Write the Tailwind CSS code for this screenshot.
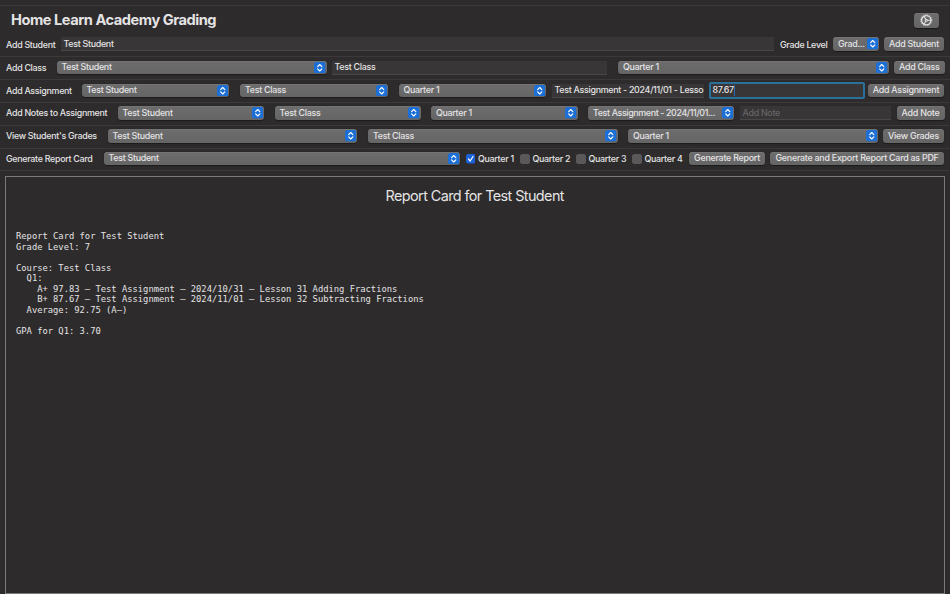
<!DOCTYPE html>
<html lang="en">
<head>
    <meta charset="UTF-8" />
    <meta name="viewport" content="width=device-width, initial-scale=1.0" />
    <title>Home Learn Academy Grading</title>
    <script src="https://cdn.jsdelivr.net/npm/@tailwindcss/browser@4"></script>
    <style>
      body {
        font-family: Inter, 'Liberation Sans', sans-serif;
      }
      .popup, .btn {
        background: linear-gradient(to bottom, #6e6d6e, #666566);
        border-radius: 3.5px;
        height: 13.5px;
        box-shadow: inset 0 0.5px 0 #7d7c7d, 0 0.5px 1px #1c1b1c;
        flex-shrink: 0;
        display: flex;
        align-items: center;
      }
      .popup {
        justify-content: space-between;
        padding: 0 1px 0 5px;
      }
      .btn {
        justify-content: center;
        letter-spacing: -0.25px;
      }
      .popup svg {
        width: 11.5px;
        height: 11.5px;
        flex-shrink: 0;
      }
      .field {
        background: #383637;
        border-bottom: 1px solid #4a4748;
        height: 14px;
        padding-left: 2.5px;
        flex-shrink: 0;
        display: flex;
        align-items: center;
        overflow: hidden;
      }
    </style>
</head>
<body class="w-[950px] h-[594px] overflow-hidden bg-[#2d2b2c] text-[#e4e3e4] text-[8.9px] font-medium tracking-[-0.29px] leading-none whitespace-nowrap">
    <!-- Shared icons -->
    <svg class="hidden">
        <symbol id="arrows" viewBox="0 0 22 22">
            <rect width="22" height="22" rx="5" fill="#1b6fd6" />
            <path d="M7 8.8L11 4.8L15 8.8M7 13.2L11 17.2L15 13.2" fill="none" stroke="#fff" stroke-width="2.2" stroke-linecap="round" stroke-linejoin="round" />
        </symbol>
    </svg>

    <div class="flex flex-col h-full">
        <div class="h-[6px] shrink-0 border-b border-[#3b393a]"></div>

        <!-- Header -->
        <div class="h-[26px] shrink-0 flex items-center justify-between pl-[11px] pr-[11px] pt-[2px]">
            <h1 class="text-[14.6px] font-bold tracking-[-0.46px]">Home Learn Academy Grading</h1>
            <button class="btn w-[25px] !h-[15px]">
                <svg class="w-[12.5px] h-[12.5px]" viewBox="0 0 24 24" fill="none" stroke="#e4e3e4">
                    <circle cx="12" cy="12" r="9" stroke-width="2.6" />
                    <circle cx="12" cy="12" r="10.8" stroke-width="1.6" stroke-dasharray="2 2.24" />
                    <circle cx="12" cy="12" r="2" stroke-width="2" />
                    <path d="M14 12H21M11 10.3L7.5 4.2M11 13.7L7.5 19.8" stroke-width="2" />
                </svg>
            </button>
        </div>

        <!-- Add student -->
        <div class="h-[25px] shrink-0 flex items-center pl-[6px] border-b border-[#3b393a]">
            <div class="w-[55px] shrink-0 pt-[2px]">Add Student</div>
            <div class="field w-[713px] pt-[2px]">Test Student</div>
            <div class="w-[53px] shrink-0 pl-[6px] pt-[2px]">Grade Level</div>
            <div class="popup w-[46px] ml-[6px]"><span>Grad...</span><svg><use href="#arrows" /></svg></div>
            <button class="btn w-[60px] ml-[5px]">Add Student</button>
        </div>

        <!-- Add class -->
        <div class="h-[23px] shrink-0 flex items-center pl-[6px] pb-px border-b border-[#3b393a]">
            <div class="w-[50.5px] shrink-0 pt-px">Add Class</div>
            <div class="popup w-[270px]"><span>Test Student</span><svg><use href="#arrows" /></svg></div>
            <div class="field w-[275px] ml-[5.5px]">Test Class</div>
            <div class="popup w-[270.5px] ml-[11px]"><span>Quarter 1</span><svg><use href="#arrows" /></svg></div>
            <button class="btn w-[50.5px] ml-[5.5px]">Add Class</button>
        </div>

        <!-- Add assignment -->
        <div class="h-[23px] shrink-0 flex items-center pl-[6px] pb-px border-b border-[#3b393a]">
            <div class="w-[75.5px] shrink-0 pt-px">Add Assignment</div>
            <div class="popup w-[147.5px]"><span>Test Student</span><svg><use href="#arrows" /></svg></div>
            <div class="popup w-[148px] ml-[11px]"><span>Test Class</span><svg><use href="#arrows" /></svg></div>
            <div class="popup w-[147.5px] ml-[10.5px]"><span>Quarter 1</span><svg><use href="#arrows" /></svg></div>
            <div class="field w-[152px] ml-[6px]">Test Assignment - 2024/11/01 - Lesso</div>
            <div class="w-[156px] h-[17px] ml-[4.5px] shrink-0 flex items-center border-2 border-[#2b6f9b] rounded-[2px] bg-[#383637] pl-[2px]">87.67<span class="w-px h-[11px] bg-[#2767b5]"></span></div>
            <button class="btn w-[76px] ml-[3.5px]">Add Assignment</button>
        </div>

        <!-- Add notes -->
        <div class="h-[23px] shrink-0 flex items-center pl-[6px] pb-[2px] border-b border-[#3b393a]">
            <div class="w-[111.5px] shrink-0 pt-px">Add Notes to Assignment</div>
            <div class="popup w-[146.5px]"><span>Test Student</span><svg><use href="#arrows" /></svg></div>
            <div class="popup w-[146px] ml-[10.5px]"><span>Test Class</span><svg><use href="#arrows" /></svg></div>
            <div class="popup w-[146.5px] ml-[10.5px]"><span>Quarter 1</span><svg><use href="#arrows" /></svg></div>
            <div class="popup w-[146px] ml-[10.5px]"><span class="tracking-[-0.37px]">Test Assignment - 2024/11/01...</span><svg><use href="#arrows" /></svg></div>
            <div class="field w-[151px] ml-[6px] pt-[2px] text-[#676566]">Add Note</div>
            <button class="btn w-[48px] ml-[5.5px]">Add Note</button>
        </div>

        <!-- View grades -->
        <div class="h-[23px] shrink-0 flex items-center pl-[6px] pb-[2px] border-b border-[#3b393a]">
            <div class="w-[101.5px] shrink-0 pt-px">View Student's Grades</div>
            <div class="popup w-[249.5px]"><span>Test Student</span><svg><use href="#arrows" /></svg></div>
            <div class="popup w-[249.5px] ml-[11px]"><span>Test Class</span><svg><use href="#arrows" /></svg></div>
            <div class="popup w-[250px] ml-[10.5px]"><span>Quarter 1</span><svg><use href="#arrows" /></svg></div>
            <button class="btn w-[61px] ml-[5px]">View Grades</button>
        </div>

        <!-- Generate report card -->
        <div class="h-[22px] shrink-0 flex items-center pl-[6px] pb-[2px] border-b border-[#3b393a]">
            <div class="w-[97.5px] shrink-0 pt-px">Generate Report Card</div>
            <div class="popup w-[356.5px]"><span>Test Student</span><svg><use href="#arrows" /></svg></div>
            <div class="flex items-center w-[54.5px] ml-[5.5px] gap-[3px] pt-px shrink-0">
                <svg class="w-[9.5px] h-[9.5px] shrink-0" viewBox="0 0 19 19">
                    <rect width="19" height="19" rx="4.5" fill="#1b62d8" />
                    <path d="M5 10L8.3 14L14 5" fill="none" stroke="#fff" stroke-width="2.4" stroke-linecap="round" stroke-linejoin="round" />
                </svg>
                <span>Quarter 1</span>
            </div>
            <div class="flex items-center w-[56px] gap-[3px] pt-px shrink-0">
                <span class="w-[9.5px] h-[9.5px] shrink-0 rounded-[2.5px] bg-[#5a5859]"></span>
                <span>Quarter 2</span>
            </div>
            <div class="flex items-center w-[56px] gap-[3px] pt-px shrink-0">
                <span class="w-[9.5px] h-[9.5px] shrink-0 rounded-[2.5px] bg-[#5a5859]"></span>
                <span>Quarter 3</span>
            </div>
            <div class="flex items-center w-[57px] gap-[3px] pt-px shrink-0">
                <span class="w-[9.5px] h-[9.5px] shrink-0 rounded-[2.5px] bg-[#5a5859]"></span>
                <span>Quarter 4</span>
            </div>
            <button class="btn w-[76px]">Generate Report</button>
            <button class="btn w-[174px] ml-[5px]">Generate and Export Report Card as PDF</button>
        </div>

        <!-- Report -->
        <div class="mt-[5px] ml-[5px] mr-[5.5px] flex-1 border border-[#7b797a] pt-[11px]">
            <h2 class="text-center text-[14.4px] font-normal leading-[16px] tracking-[-0.58px]">Report Card for Test Student</h2>
            <pre class="mt-[27px] pl-[10px] font-['DejaVu_Sans_Mono',monospace] font-normal tracking-normal text-[8.8px] leading-[10.56px]">Report Card for Test Student
Grade Level: 7

Course: Test Class
  Q1:
    A+ 97.83 – Test Assignment – 2024/10/31 – Lesson 31 Adding Fractions
    B+ 87.67 – Test Assignment – 2024/11/01 – Lesson 32 Subtracting Fractions
  Average: 92.75 (A–)

GPA for Q1: 3.70</pre>
        </div>
    </div>
</body>
</html>
